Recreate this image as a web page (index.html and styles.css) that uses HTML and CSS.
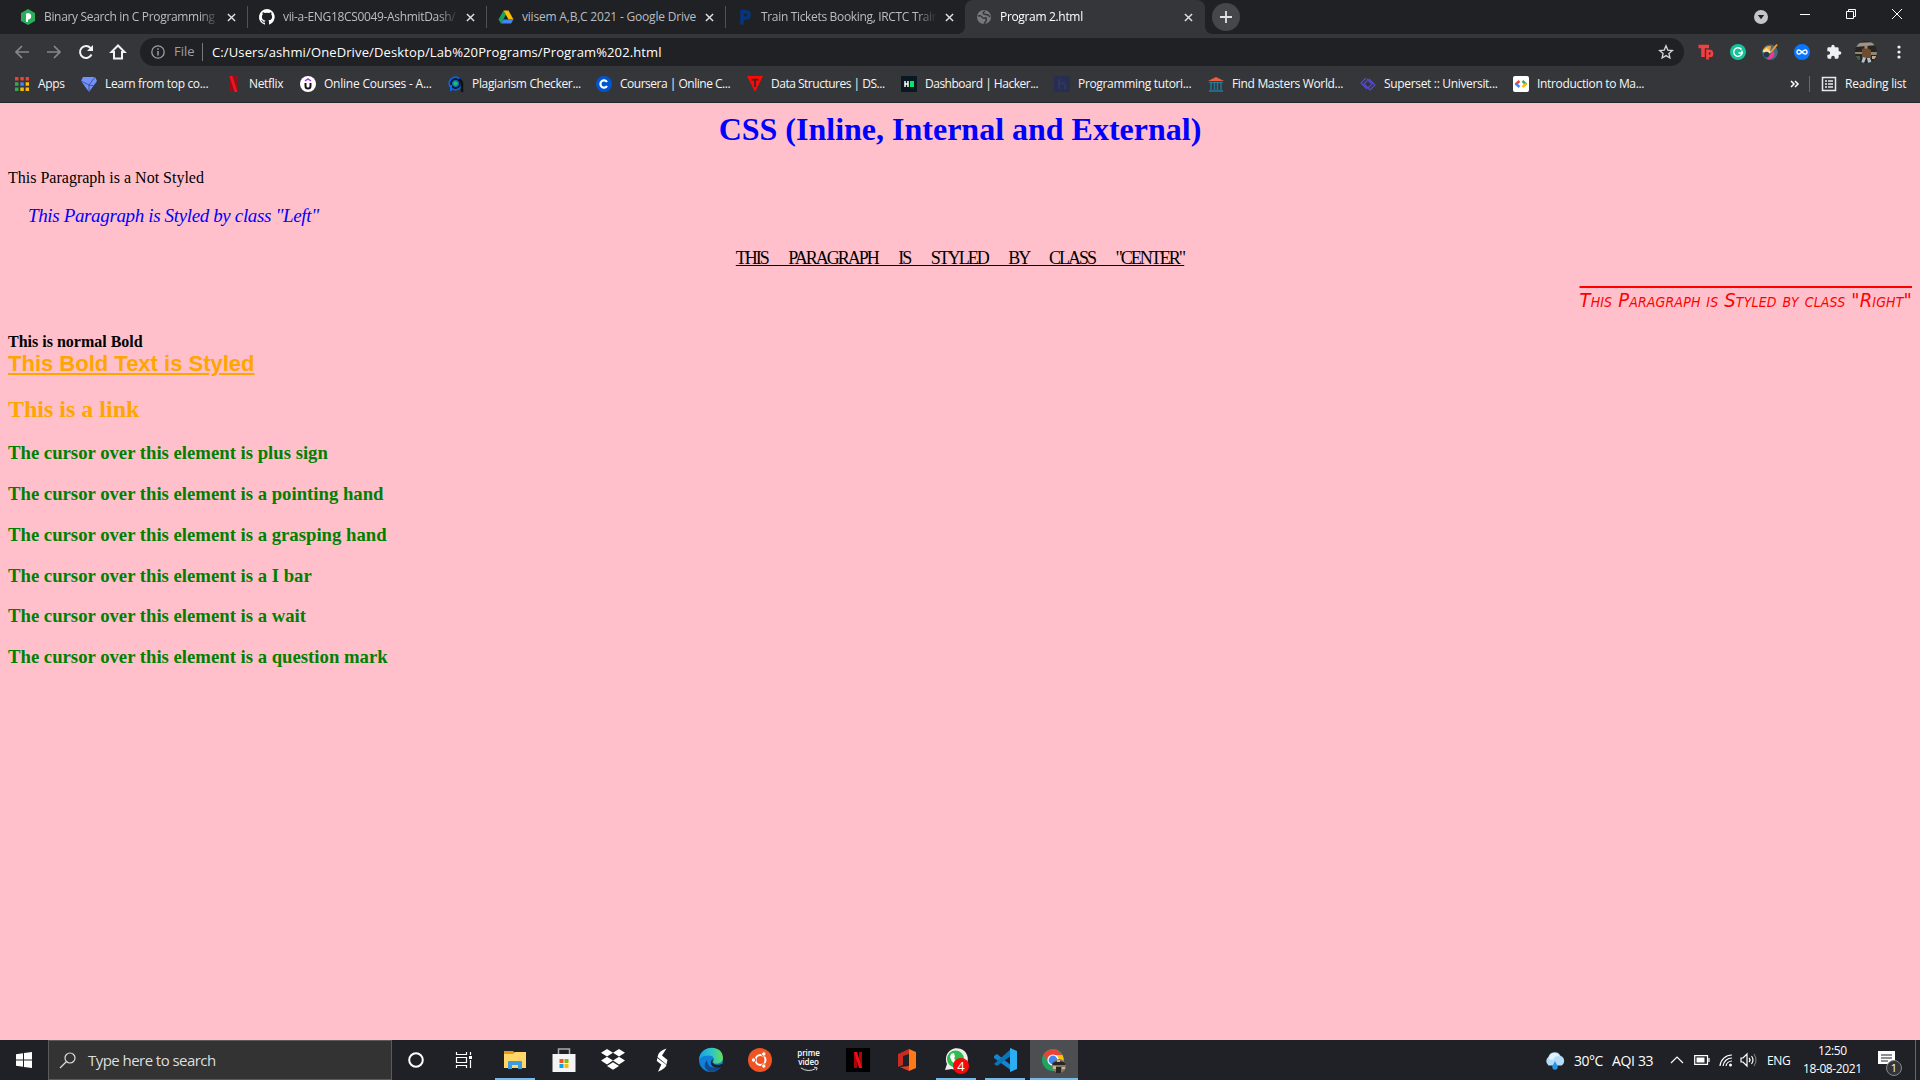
FILE: index.html
```html
<!DOCTYPE html>
<html lang="en">
<head>
<meta charset="utf-8">
<title>Program 2.html</title>
<link rel="stylesheet" href="styles.css">
</head>
<body>
<div class="screen">
<header class="tabstrip">
  <div class="tab"><svg class="fav" viewBox="0 0 16 16"><path fill="#2aad5c" d="M8 0l7 4v8l-7 4-7-4V4z"/><path fill="#fff" d="M6 4.5c4-1 6 1 5 4-.5 1.500-2 2-3 2V13H6z"/></svg><span class="title">Binary Search in C Programming</span><svg class="close" viewBox="0 0 10 10"><path d="M1 1l8 8M9 1L1 9"/></svg></div>
  <div class="tab"><svg class="fav" viewBox="0 0 16 16"><path fill="#fff" d="M8 0a8 8 0 0 0-2.500 15.600c.4.100.5-.2.500-.4v-1.500c-2.200.5-2.700-.9-2.700-.9-.4-.9-.9-1.200-.9-1.200-.7-.5.100-.5.100-.5.800.1 1.200.8 1.200.8.700 1.200 1.900.9 2.300.7.100-.5.300-.9.500-1.100-1.800-.2-3.600-.9-3.600-4 0-.9.300-1.600.8-2.100-.1-.2-.4-1 .1-2.100 0 0 .7-.2 2.200.8a7.600 7.600 0 0 1 4 0c1.500-1 2.200-.8 2.200-.8.400 1.100.2 1.900.1 2.100.5.600.8 1.300.8 2.100 0 3.100-1.900 3.700-3.700 3.900.3.300.6.800.6 1.500v2.200c0 .2.100.5.500.4A8 8 0 0 0 8 0z"/></svg><span class="title">vii-a-ENG18CS0049-AshmitDash/</span><svg class="close" viewBox="0 0 10 10"><path d="M1 1l8 8M9 1L1 9"/></svg></div>
  <div class="tab"><svg class="fav" viewBox="0 0 16 16"><path fill="#17a35b" d="M5.500 1.500L.5 10.500 3 14.500l5-9z"/><path fill="#fbbc04" d="M5.500 1.500h5l5 9h-5z"/><path fill="#4285f4" d="M5.300 10.500h10.200l-2.500 4H3z"/></svg><span class="title whole">viisem A,B,C 2021 - Google Drive</span><svg class="close" viewBox="0 0 10 10"><path d="M1 1l8 8M9 1L1 9"/></svg></div>
  <div class="tab last"><svg class="fav" viewBox="0 0 16 16"><path fill="none" stroke="#06357f" stroke-width="3.600" d="M5 15.500V3h4.500q2.500 0 2.500 3t-2.500 3H5M3.500 2.500h5"/></svg><span class="title">Train Tickets Booking, IRCTC Train</span><svg class="close" viewBox="0 0 10 10"><path d="M1 1l8 8M9 1L1 9"/></svg></div>
  <div class="tab active"><svg class="fav" viewBox="0 0 16 16"><circle cx="8" cy="8" r="7" fill="#77797d"/><path d="M2 7q3-1 4 1t3 1 1 3l-2 3M9 2q-3 2-1 3l4 1 2 2" stroke="#35363a" stroke-width="1.500" fill="none"/></svg><span class="title">Program 2.html</span><svg class="close" viewBox="0 0 10 10"><path d="M1 1l8 8M9 1L1 9"/></svg></div>
  <div class="newtab"><svg width="12" height="12" viewBox="0 0 12 12"><path d="M6 0v12M0 6h12" stroke="#e0e2e5" stroke-width="1.800"/></svg></div>
  <div class="window-controls">
    <svg width="16" height="16" viewBox="0 0 16 16" class="drop"><circle cx="8" cy="8" r="7" fill="#c3c5c9"/><path d="M4.800 6h6.400L8 10.200z" fill="#202124"/></svg>
    <svg width="12" height="12" viewBox="0 0 12 12"><path d="M1 6.500h10"/></svg>
    <svg width="12" height="12" viewBox="0 0 12 12"><path d="M1.500 3.500h7v7h-7zM3.500 3V1.500h7v7H9"/></svg>
    <svg width="12" height="12" viewBox="0 0 12 12"><path d="M1 1l10 10M11 1L1 11"/></svg>
  </div>
</header>
<nav class="toolbar">
  <svg class="nav dim" viewBox="0 0 16 16"><path d="M15 8H2M8 2L2 8l6 6"/></svg>
  <svg class="nav dim" viewBox="0 0 16 16"><path d="M1 8h13M8 2l6 6-6 6"/></svg>
  <svg class="nav" viewBox="0 0 16 16"><path d="M13.500 10.500A6 6 0 1 1 12.500 4"/><path class="solid" d="M15 1v6H9z"/></svg>
  <svg class="nav" viewBox="0 0 16 16"><path d="M8 1.500L1.500 8H4v6.500h8V8h2.500z"/></svg>
  <div class="omnibox">
    <svg width="14" height="14" viewBox="0 0 14 14"><circle cx="7" cy="7" r="6.200" fill="none" stroke="#9aa0a6" stroke-width="1.300"/><path d="M7 3.200v1.500M7 6v4.500" stroke="#9aa0a6" stroke-width="1.500"/></svg>
    <span class="scheme">File</span>
    <span class="url">C:/Users/ashmi/OneDrive/Desktop/Lab%20Programs/Program%202.html</span>
    <svg width="16" height="16" viewBox="0 0 16 16"><path d="M8 1.800l1.800 4.300 4.600.4-3.500 3 1 4.500L8 11.600 4.100 14l1-4.500-3.500-3 4.600-.4z" fill="none" stroke="#d5d7da" stroke-width="1.300"/></svg>
  </div>
  <div class="extensions">
    <svg viewBox="0 0 16 16"><path d="M.5 2.500h10.500M5 2.500V13" stroke="#f33f3f" stroke-width="3.600"/><path d="M9.500 5.500V15.500M9.500 7H12q2 0 2 2.500T12 12H9.500" stroke="#f33f3f" stroke-width="2.700" fill="none"/></svg>
    <svg viewBox="0 0 16 16"><circle cx="8" cy="8" r="8" fill="#15c39a"/><path d="M11.500 5.500A4.300 4.300 0 1 0 12.200 9H8.500M12 6.500V10" stroke="#fff" stroke-width="1.400" fill="none"/></svg>
    <svg viewBox="0 0 16 16"><circle cx="8" cy="8.200" r="7.800" fill="#406b86"/><path d="M.5 7.500A7.500 7.500 0 0 1 9 2L8 8z" fill="#fba63b"/><path d="M.5 7l4-3 5 4-5 3z" fill="#fde28b"/><path d="M5 15l4-6 3-1.500q2 6-5 8z" fill="#ee3a8b"/><circle cx="4.500" cy="10.500" r="2.800" fill="#223a50"/><path d="M9 8l6-7.500" stroke="#f59a33" stroke-width="2"/></svg>
    <svg viewBox="0 0 16 16"><circle cx="8" cy="8" r="8" fill="#0877ff"/><path d="M8 8C6 5.500 3 5 3 8s3 2.500 5 0 5-3 5 0-3 2.500-5 0z" fill="none" stroke="#fff" stroke-width="1.400"/></svg>
    <svg viewBox="0 0 24 24"><path fill="#eef0f2" d="M20.500 11H19V7a2 2 0 0 0-2-2h-4V3.500a2.500 2.500 0 0 0-5 0V5H4a2 2 0 0 0-2 2v3.800h1.500a2.700 2.700 0 0 1 0 5.400H2V20a2 2 0 0 0 2 2h3.800v-1.500a2.700 2.700 0 0 1 5.400 0V22H17a2 2 0 0 0 2-2v-4h1.500a2.500 2.500 0 0 0 0-5z"/></svg>
    <svg class="avatar" viewBox="0 0 22 22"><defs><clipPath id="face"><circle cx="11" cy="11" r="11"/></clipPath></defs><g clip-path="url(#face)"><path fill="#292622" d="M0 0h22v22H0z"/><path fill="#9a948d" d="M0 2l22-1v3L0 6z"/><path fill="#8a877d" d="M0 11h7v2H0zM16 11h6v3h-6z"/><path fill="#6c4d31" d="M7 8l3-1h2l4 2v8H7z"/><path fill="#aebfc9" d="M8 16l3 1-2 5H6zM12 17h3l2 5h-4z"/><path fill="#b98363" d="M9.500 4h3v3.500h-3z"/><path fill="#45624b" d="M0 15h5v4H0z"/><path fill="#c9a78c" d="M17 15h4v3h-4z"/></g></svg>
    <svg class="dots" viewBox="0 0 4 16"><g fill="#eef0f2"><circle cx="2" cy="3" r="1.600"/><circle cx="2" cy="8" r="1.600"/><circle cx="2" cy="13" r="1.600"/></g></svg>
  </div>
</nav>
<nav class="bookmarks">
  <a><svg viewBox="0 0 16 16"><path fill="#ea4335" d="M1 1h3.500v3.500H1zM6.300 1h3.500v3.500H6.300zM11.600 1h3.400v3.500h-3.400z"/><path fill="#34a853" d="M1 6.300h3.500v3.500H1zM1 11.600h3.500V15H1z"/><path fill="#4285f4" d="M6.300 6.300h3.500v3.500H6.300z"/><path fill="#fbbc04" d="M11.600 6.300H15v3.500h-3.400zM6.300 11.600h3.500V15H6.300zM11.600 11.600H15V15h-3.400z"/></svg><span>Apps</span></a>
  <a><svg viewBox="0 0 16 16"><path fill="#7392ff" d="M2 1h12l2 4-8 11L0 5z"/><path d="M0 5l8 4 6-8M8 9v7M8 9l5 1" stroke="#35447b" fill="none" stroke-width=".8"/></svg><span>Learn from top co...</span></a>
  <a><svg viewBox="0 0 16 16"><path fill="#a90711" d="M1.500 0h3v16h-3zM6.500 0h3v16h-3z"/><path fill="#f01420" d="M1.500 0h3l5 16h-3z"/></svg><span>Netflix</span></a>
  <a><svg viewBox="0 0 16 16"><circle cx="8" cy="8" r="8" fill="#fff"/><path d="M5.500 7v3q0 2.500 2.500 2.500t2.500-2.500V7" stroke="#17171a" stroke-width="2" fill="none"/><path d="M5 5l3-2 3 2" stroke="#a435f0" stroke-width="1.500" fill="none"/></svg><span class="loose">Online Courses - A...</span></a>
  <a><svg viewBox="0 0 16 16"><circle cx="7.500" cy="7.500" r="6.300" fill="#15181c" stroke="#0c61df" stroke-width="1.800"/><circle cx="7.500" cy="7.500" r="2.800" fill="#29ba69" stroke="#0b72d9" stroke-width="1.400"/><path d="M11 3q4 3 3 7v6" stroke="#111" stroke-width="2.500" fill="none"/><path d="M3 9v6" stroke="#1269ef" stroke-width="2"/></svg><span>Plagiarism Checker...</span></a>
  <a><svg viewBox="0 0 16 16"><circle cx="8" cy="8" r="8" fill="#0056d2"/><path d="M11 6a3.600 3.600 0 1 0 0 4" stroke="#fff" stroke-width="2.200" fill="none"/></svg><span class="tight">Coursera | Online C...</span></a>
  <a><svg viewBox="0 0 16 16"><path fill="#ff0905" d="M0 0h16L8 16z"/><path d="M4.500 3.700h7M8 4v7" stroke="#392527" stroke-width="1.700"/></svg><span class="tight">Data Structures | DS...</span></a>
  <a><svg viewBox="0 0 16 16"><path fill="#0b1721" d="M0 0h16v16H0z"/><path d="M4 5v6M7 5v6M4 8h3" stroke="#fff" stroke-width="1.500"/><path fill="#00ea64" d="M9 5h4v6H9z"/></svg><span class="tight">Dashboard | Hacker...</span></a>
  <a><svg viewBox="0 0 16 16"><path fill="#292e50" d="M0 0h16v16H0z"/><path d="M5 3v10M5 9q5-4 6 0v4" stroke="#2e3666" stroke-width="2" fill="none"/></svg><span>Programming tutori...</span></a>
  <a><svg viewBox="0 0 16 16"><path fill="#ed5e39" d="M8 1l8 4H0z"/><path d="M1 6.500h14M3 7v7M6.500 7v7M9.500 7v7M13 7v7M1 15h14" stroke="#20799a" stroke-width="1.400"/></svg><span>Find Masters World...</span></a>
  <a><svg viewBox="0 0 16 16"><path d="M6 2L1 7l6 6M8 4L4 8l6 6M10 14l5-5-6-6M8 12l4-4-5-5" stroke="#534bd1" stroke-width="1.200" fill="none"/></svg><span>Superset :: Universit...</span></a>
  <a><svg viewBox="0 0 16 16"><rect width="16" height="16" rx="2" fill="#fff"/><g stroke-width="2.500"><path d="M6.500 5L2.500 8.500" stroke="#ea4335"/><path d="M2.500 7.500l4 3.500" stroke="#4285f4"/><path d="M9.500 5l4 3.500" stroke="#34a853"/><path d="M13.500 7.500l-4 3.500" stroke="#fbbc04"/></g></svg><span>Introduction to Ma...</span></a>
  <div class="reading"><svg class="more" viewBox="0 0 10 10"><path d="M1 2l3 3-3 3M5 2l3 3-3 3"/></svg><i></i><svg viewBox="0 0 16 16"><path d="M1.500 1.500h13v13h-13zM4 5h2M7 5h5M4 8h2M7 8h5M4 11h2M7 11h5" fill="none" stroke="#e8eaed" stroke-width="1.500"/></svg><span>Reading list</span></div>
</nav>
<main class="page">
  <h1>CSS (Inline, Internal and External)</h1>
  <p>This Paragraph is a Not Styled</p>
  <p class="left">This Paragraph is Styled by class "Left"</p>
  <p class="center">This Paragraph is Styled by class "Center"</p>
  <p class="right">This Paragraph is Styled by class "Right"</p>
  <b>This is normal Bold</b><br>
  <b class="styled">This Bold Text is Styled</b>
  <h2>This is a link</h2>
  <h3>The cursor over this element is plus sign</h3>
  <h3>The cursor over this element is a pointing hand</h3>
  <h3>The cursor over this element is a grasping hand</h3>
  <h3>The cursor over this element is a I bar</h3>
  <h3>The cursor over this element is a wait</h3>
  <h3>The cursor over this element is a question mark</h3>
</main>
<footer class="taskbar">
  <div class="start"><svg width="16" height="16" viewBox="0 0 16 16"><path fill="#fff" d="M0 2.200l7-1v6.300H0zM8 1l8-1v7.500H8zM0 8.500h7v6.300l-7-1zM8 8.500h8V16l-8-1z"/></svg></div>
  <div class="search"><svg width="16" height="16" viewBox="0 0 16 16"><circle cx="10" cy="6" r="5" fill="none" stroke="#ddd" stroke-width="1.200"/><path d="M6.500 9.500L0 16" stroke="#ddd" stroke-width="1.200"/></svg><span>Type here to search</span></div>
  <div class="sys"><svg width="16" height="16" viewBox="0 0 16 16"><circle cx="8" cy="8" r="6.800" fill="none" stroke="#fff" stroke-width="2"/></svg></div>
  <div class="sys task"><svg width="16" height="16" viewBox="0 0 16 16"><path d="M.5 0v2.500h10V0M.5 16v-2.500h10V16M.5 5.500h10v5H.5zM14.500 0v3M14.500 8v8" fill="none" stroke="#fff" stroke-width="1.200"/><path d="M13 4h3v3h-3z" fill="#fff"/></svg></div>
  <div class="app open"><svg viewBox="0 0 24 24"><path fill="#e29b13" d="M1 3h9l2 2v3H1z"/><path fill="#ffd667" d="M1 6h9l2-2h11v16H1z"/><path fill="#3f9be0" d="M5 14q0-1 1-1h12q1 0 1 1v7h-4v-4H9v4H5z"/></svg></div>
  <div class="app"><svg viewBox="0 0 24 24"><path d="M6.500 7V1h11v6" fill="none" stroke="#aaa" stroke-width="1.500"/><path fill="#f4f4f4" d="M.5 6h23v18H.5z"/><path fill="#f35325" d="M7.500 11h4v4h-4z"/><path fill="#81bc06" d="M12.500 11h4v4h-4z"/><path fill="#05a6f0" d="M7.500 16h4v4h-4z"/><path fill="#ffba08" d="M12.500 16h4v4h-4z"/></svg></div>
  <div class="app"><svg viewBox="0 0 24 24"><path fill="#fff" d="M6 1l6 3.800-6 3.800-6-3.800zM18 1l6 3.800-6 3.800-6-3.800zM6 8.800l6 3.800-6 3.800-6-3.800zM18 8.800l6 3.800-6 3.800-6-3.800zM12 14.300l6 3.700-6 3.700L6 18z"/></svg></div>
  <div class="app"><svg viewBox="0 0 24 24"><path fill="#fff" d="M16.500.5Q8 3 7.500 9l9 7.500 1-4.500-5.500-4.500zM7.300 10l-.5 3 4.500 3.500-3.300 7.200q8-3.500 8.500-6.700z"/></svg></div>
  <div class="app"><svg viewBox="0 0 24 24"><defs><linearGradient id="sea"><stop stop-color="#199fe4"/><stop offset=".5" stop-color="#2cc4cb"/><stop offset="1" stop-color="#65df56"/></linearGradient></defs><circle cx="12" cy="12" r="12" fill="#1180d8"/><path fill="#124a8c" d="M8 12q0 10 14 7-5 6-12 4.500Q2 19 8 12z"/><path fill="url(#sea)" d="M0 12C1-4 24-4 24 10c0 6-9 7-10 4 3-4-1-7-5-6.500S1 9 0 12z"/><path fill="#202124" d="M14 12c-2.500 3 3 6.500 8.500 4l1.500 0v2l-2 1.200c-5 2-11-1-10-5.200.5-2 1.500-3 2-2z"/></svg></div>
  <div class="app"><svg viewBox="0 0 24 24"><circle cx="12" cy="12" r="12" fill="#f05423"/><circle cx="12.500" cy="12" r="5" fill="none" stroke="#fff" stroke-width="2"/><g fill="#fff" stroke="#f05423"><circle cx="5.500" cy="12" r="2.200"/><circle cx="15.800" cy="6" r="2.200"/><circle cx="15.800" cy="18" r="2.200"/></g></svg></div>
  <div class="app prime"><span>prime</span><span>video</span><svg viewBox="0 0 22 6"><path d="M1 1q9 6 18 1M17 0l4 1-1 3" fill="none" stroke="#fff"/></svg></div>
  <div class="app"><svg viewBox="0 0 24 24"><path d="M0 0h24v24H0z"/><path fill="#a5050d" d="M8 4h3v16H8zM13 4h3v16h-3z"/><path fill="#f00d18" d="M8 4h3l5 16h-3z"/></svg></div>
  <div class="app"><svg viewBox="0 0 24 24"><path fill="#c62c20" d="M3 6l11-5v5L8 8v9l-5 2z"/><path fill="#ff7a16" d="M14 1l7 3v16l-7 3z"/><path fill="#df3d1e" d="M5 19l9-1v5z"/></svg></div>
  <div class="app open"><svg viewBox="0 0 24 24"><path fill="#eee" d="M1 22l2-6A11 11 0 1 1 8 21z"/><circle cx="11.500" cy="11" r="8.500" fill="#2fbc51"/><path fill="#fff" d="M7 6l3-1 1 4-1 1q2 4 5 4l2-2 3 3-2 3Q8 17 6 9z"/></svg><em>4</em></div>
  <div class="app open"><svg viewBox="0 0 24 24"><path fill="#1684ce" d="M1 8l3-2 15 12v5L1 10z"/><path fill="#0975bb" d="M1 16l18-16v7L4 18z"/><path fill="#2caef3" d="M17 0l7 3v18l-7 3z"/></svg></div>
  <div class="app open current"><svg viewBox="0 0 24 24"><circle cx="11" cy="12" r="11" fill="#1da462"/><path fill="#ea4335" d="M1.500 7a11 11 0 0 1 19 0H11L7 14z"/><path fill="#fbc116" d="M11 7h9.500q4 9-4 14L11 23l5-9z"/><circle cx="11" cy="12" r="5" fill="#4285f4" stroke="#fff" stroke-width="1.200"/><circle cx="17" cy="18" r="7" fill="#8a755f"/><path fill="#292521" d="M10.500 15q6-4 13 0v2h-13zM14 19h5v6h-5z"/><path fill="#c9b69e" d="M11 18h3v3h-3zM20 19h3v2h-3zM15 12h3v2h-3z"/></svg></div>
  <div class="tray">
    <svg class="cloud" viewBox="0 0 22 20"><path fill="#b4dcf8" d="M5 15a5 5 0 0 1 0-8 6 6 0 0 1 11-1 5 5 0 0 1 1 9z"/><path fill="#e1f3ff" d="M5 9q2-7 8-5 2 1 2 3-3-2-6 3z"/><path fill="#2595ed" d="M11 11l2.500 5q0 3-2.500 3t-2.500-3z"/></svg>
    <span class="temp">30°C</span><span class="aqi">AQI 33</span>
    <svg class="caret" viewBox="0 0 12 8"><path d="M0 7l6-6 6 6"/></svg>
    <svg class="battery" viewBox="0 0 16 10"><path d="M.7.7h12.800v8.600H.7zM15 3v4"/><path class="solid" d="M2.500 2.500h8v5h-8z"/></svg>
    <svg class="wifi" viewBox="0 0 14 14"><path d="M1 13A12 12 0 0 1 13 2M4 13a9 9 0 0 1 9-8M7 13a6 6 0 0 1 6-5"/><circle cx="11.500" cy="12" r="1.500" class="solid"/></svg>
    <svg class="volume" viewBox="0 0 18 14"><path d="M1 5h2l4-4v12L3 9H1zM9 5q2 2 0 4M11.500 3q3 4 0 8"/><path class="faint" d="M14 1q4 6 0 12"/></svg>
    <span class="lang">ENG</span>
    <div class="clock"><span>12:50</span><span>18-08-2021</span></div>
    <div class="notice"><svg width="17" height="17" viewBox="0 0 17 17"><path fill="#fff" d="M0 0h17v13h-4v4l-4-4H0z"/><path d="M3 4h11M3 7h11M3 10h7" stroke="#202124" stroke-width="1.200"/></svg><b>1</b></div>
    <i class="edge"></i>
  </div>
</footer>
</div>
</body>
</html>
```
FILE: styles.css
```css
* { box-sizing: border-box; }
body { margin: 0; }
svg { display: block; flex: none; overflow: visible; }
.screen { width: 1920px; height: 1080px; display: flex; flex-direction: column; overflow: hidden; font-family: "Open Sans", sans-serif; }

.tabstrip { height: 34px; background: #202124; display: flex; padding-left: 9px; flex: none; }
.tab { width: 239px; height: 34px; display: flex; align-items: center; padding: 0 11px; position: relative; color: #b9bdc2; }
.fav { width: 16px; height: 16px; margin-right: 8px; }
.title { width: 176px; font-size: 12px; line-height: 18px; white-space: nowrap; overflow: hidden; letter-spacing: -0.33px; -webkit-mask-image: linear-gradient(90deg, #000 155px, transparent 176px); mask-image: linear-gradient(90deg, #000 155px, transparent 176px); }
.title.whole { letter-spacing: -0.2px; -webkit-mask-image: none; mask-image: none; }
.close { width: 9px; height: 9px; margin-left: 8px; fill: none; stroke: #dfe1e5; stroke-width: 1.6; }
.tab:not(.active):not(.last) { border-right: 1px solid transparent; border-image: linear-gradient(transparent 7px, #505256 7px, #505256 27px, transparent 27px) 1; }
.tab.active { width: 240px; background: #35363a; color: #fff; border-radius: 8px 8px 0 0; }
.tab.active::before, .tab.active::after { content: ""; position: absolute; bottom: 0; width: 8px; height: 8px; }
.tab.active::before { left: -8px; background: radial-gradient(circle at 0 0, transparent 8px, #35363a 8px); }
.tab.active::after { right: -8px; background: radial-gradient(circle at 100% 0, transparent 8px, #35363a 8px); }
.newtab { width: 28px; height: 28px; margin: 3px 0 0 7px; border-radius: 50%; background: #46474b; display: grid; place-items: center; }
.window-controls { margin-left: auto; padding-right: 17px; height: 28px; display: flex; align-items: center; fill: none; stroke: #fff; }
.window-controls svg { margin-left: 34px; }
.window-controls .drop { stroke: none; margin: 6px 0 0; }
.window-controls .drop + svg { margin-left: 30px; }

.toolbar { height: 36px; background: #35363a; display: flex; align-items: center; padding: 0 19px 0 14px; flex: none; }
.nav { width: 16px; height: 16px; margin-right: 16px; fill: none; stroke: #f1f3f4; stroke-width: 2; }
.nav.dim { stroke: #85878b; stroke-width: 1.7; }
.nav .solid { fill: #f1f3f4; stroke: none; }
.omnibox { margin-left: -2px; width: 1544px; height: 28px; border-radius: 14px; background: #202124; display: flex; align-items: center; padding: 0 10px 0 11px; font-size: 13px; line-height: 20px; white-space: nowrap; }
.scheme { color: #9aa0a6; margin-left: 9px; width: 29px; height: 18px; line-height: 17px; border-right: 1px solid #77797d; }
.url { color: #fff; margin-left: 9px; margin-right: auto; letter-spacing: 0.12px; }
.extensions { display: flex; align-items: center; margin-left: 14px; flex: 1; }
.extensions svg { width: 16px; height: 16px; margin-right: 16px; }
.extensions .avatar { width: 22px; height: 22px; margin: 0 18px 0 -3px; }
.extensions .dots { width: 4px; margin: 0 0 0 auto; }

.bookmarks { height: 33px; background: #35363a; border-bottom: 1px solid #232629; display: flex; align-items: center; padding: 0 13px 5px 14px; flex: none; color: #f6f6f6; font-size: 12px; line-height: 18px; white-space: nowrap; letter-spacing: -0.33px; }
.bookmarks a { display: flex; align-items: center; gap: 8px; width: 154px; flex: none; }
.bookmarks a svg, .reading svg { width: 16px; height: 16px; }
.bookmarks a:nth-child(1) { width: 67px; }
.bookmarks a:nth-child(2) { width: 147px; }
.bookmarks a:nth-child(3) { width: 72px; gap: 5px; }
.bookmarks a:nth-child(4) { width: 148px; }
.bookmarks a:nth-child(5) { width: 148px; }
.bookmarks a:nth-child(6) { width: 151px; }
.bookmarks a:nth-child(8) { width: 153px; }
.bookmarks a:nth-child(10) { width: 152px; }
.bookmarks a:nth-child(11) { width: 153px; }
.bookmarks .loose { letter-spacing: -0.22px; }
.bookmarks .tight { letter-spacing: -0.49px; }
.reading { margin-left: auto; display: flex; align-items: center; }
.reading .more { width: 10px; height: 10px; fill: none; stroke: #fff; stroke-width: 1.5; }
.reading i { width: 1px; height: 16px; background: #66686c; margin: 0 11px 0 9px; }
.reading span { width: 62px; margin-left: 8px; letter-spacing: -0.25px; }

.page { flex: 1; background: pink; padding: 8px; font-family: "Liberation Serif", serif; font-size: 16px; line-height: normal; overflow: hidden; }
.page h1 { margin: 0 0 21.44px; font-size: 32px; line-height: 37px; text-align: center; color: blue; }
.page p { margin: 16px 0; }
.page .left { margin: 16px 0 0 20px; font-size: 19px; line-height: 26px; letter-spacing: -0.36px; font-style: italic; color: blue; }
.page .center { margin: 18.5px 0 0; text-align: center; text-transform: uppercase; text-decoration: underline; font-size: 18px; line-height: 21px; letter-spacing: -2px; word-spacing: 18px; }
.page .right { margin: 19.5px 0 20.5px; font-family: "DejaVu Sans Condensed", "DejaVu Sans", sans-serif; font-stretch: condensed; font-style: italic; font-variant: small-caps; text-align: right; text-decoration: overline; font-size: 20px; line-height: 24px; letter-spacing: 0.15px; color: red; }
.page .styled { font-family: "Liberation Sans", sans-serif; font-size: 22px; line-height: 25px; color: orange; text-decoration: underline; }
.page h2 { margin: 20.5px 0 19px; font-size: 24px; line-height: 27px; color: orange; }
.page h3 { margin: 18.7px 0; font-size: 18.72px; line-height: 22px; color: green; }

.taskbar { height: 40px; background: #202126; display: flex; color: #fff; flex: none; }
.start { width: 48px; display: grid; place-items: center; }
.search { width: 344px; background: #333; border: 1px solid #5b5b5b; display: flex; align-items: center; padding-left: 11px; color: #dedede; font-size: 15px; }
.search span { margin-left: 12px; letter-spacing: -0.55px; }
.sys { width: 48px; display: grid; place-items: center; }
.sys.task { width: 50px; padding-right: 2px; }
.app { width: 49px; position: relative; display: grid; place-items: center; }
.app svg { width: 24px; height: 24px; }
.app.open::after { content: ""; position: absolute; left: 5px; right: 4px; bottom: 0; height: 2px; background: #76b9ed; }
.app.current { background: #4d4e52; width: 48px; margin-left: 1px; }
.app.current::after { left: 0; right: 0; }
.app em { position: absolute; left: 22px; top: 18px; width: 16px; height: 16px; border-radius: 50%; background: #fa0808; font: 13px/16px "Open Sans", sans-serif; text-align: center; }
.app.prime { display: flex; flex-direction: column; align-items: center; justify-content: center; font-size: 8px; line-height: 8px; font-weight: 600; letter-spacing: -.1px; }
.prime span + span { margin-top: 1px; }
.prime svg { width: 18px; height: 5px; margin-top: 1px; }
.tray { margin-left: auto; display: flex; align-items: center; font-size: 14px; white-space: nowrap; fill: none; stroke: none; }
.tray > svg { stroke: #fff; stroke-width: 1.2; }
.tray .solid { fill: #fff; stroke: none; }
.tray .faint { stroke: #777; }
.tray .cloud { width: 24px; height: 22px; stroke: none; margin-right: 7px; }
.temp { width: 38px; letter-spacing: -.5px; }
.aqi { width: 59px; letter-spacing: -.35px; }
.caret { width: 12px; height: 8px; margin-right: 11px; }
.battery { width: 16px; height: 10px; margin-right: 9px; }
.wifi { width: 14px; height: 14px; margin-right: 7px; }
.volume { width: 18px; height: 14px; margin-right: 9px; }
.lang { width: 36px; font-size: 12px; letter-spacing: -.4px; }
.clock { width: 58px; font-size: 12px; line-height: 18px; text-align: center; display: grid; letter-spacing: -.4px; }
.notice { width: 25px; height: 20px; margin-left: 17px; position: relative; padding-top: 1px; }
.notice b { position: absolute; right: 1px; bottom: -6px; width: 16px; height: 16px; border: 1px solid #888; border-radius: 50%; background: #333439; font: 11px/14px "Open Sans", sans-serif; text-align: center; }
.edge { width: 1px; height: 40px; background: #66686c; margin: 0 4px 0 12px; }
```
